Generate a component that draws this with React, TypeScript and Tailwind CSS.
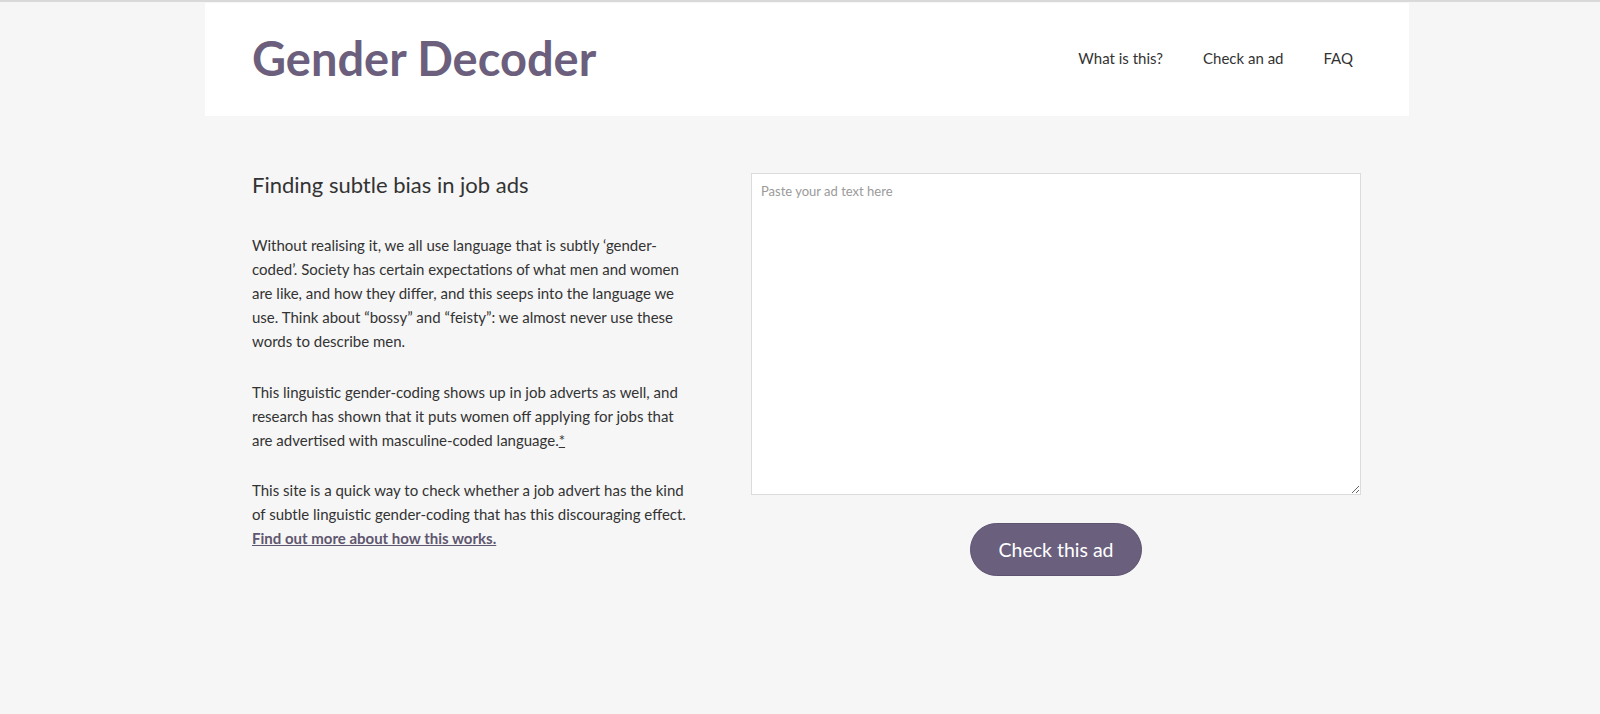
import React from 'react';

function Header() {
  return (
    <header className="ml-[205px] mt-[1px] flex h-[113px] w-[1204px] items-center justify-between bg-white pb-[2px] pl-[47px] pr-[56px]">
      <h1 className="text-[47px] font-bold leading-none text-[#6b5f7d]">Gender Decoder</h1>
      <nav className="flex items-center gap-[40px] text-[15px] text-[#333]">
        <a href="#">What is this?</a>
        <a href="#">Check an ad</a>
        <a href="#">FAQ</a>
      </nav>
    </header>
  );
}

function Intro() {
  return (
    <div className="w-[438px] text-[#333]">
      <h2 className="text-[22px] leading-[30px]">Finding subtle bias in job ads</h2>
      <div className="mt-[33px] text-[15px] leading-[24px]">
        <p className="mb-[27px]">
          Without realising it, we all use language that is subtly ‘gender-coded’. Society has certain
          expectations of what men and women are like, and how they differ, and this seeps into the
          language we use. Think about “bossy” and “feisty”: we almost never use these words to describe
          men.
        </p>
        <p className="mb-[26px]">
          This linguistic gender-coding shows up in job adverts as well, and research has shown that it
          puts women off applying for jobs that are advertised with masculine-coded language.
          <a href="#" className="underline">*</a>
        </p>
        <p>
          This site is a quick way to check whether a job advert has the kind of subtle linguistic
          gender-coding that has this discouraging effect.{' '}
          <a href="#" className="font-bold text-[#5f566f] underline">Find out more about how this works.</a>
        </p>
      </div>
    </div>
  );
}

function Checker() {
  return (
    <div className="ml-[61px] mt-[3px] flex w-[610px] flex-col items-center">
      <textarea
        placeholder="Paste your ad text here"
        className="h-[322px] w-full border border-[#dcdcdc] bg-white px-[9px] py-[8px] text-[13px] text-[#333] outline-none placeholder:text-[#9a9a9a]"
      />
      <button className="mt-[28px] h-[53px] w-[172px] rounded-full border border-[#5e5270] bg-[#6b5f7e] text-[19.5px] text-white">
        Check this ad
      </button>
    </div>
  );
}

export default function App() {
  return (
    <div className="min-h-screen border-t-2 border-[#d9d9d9] bg-[#f6f6f6] font-['Lato',sans-serif]">
      <Header />
      <main className="ml-[252px] flex items-start pt-[54px]">
        <Intro />
        <Checker />
      </main>
    </div>
  );
}
